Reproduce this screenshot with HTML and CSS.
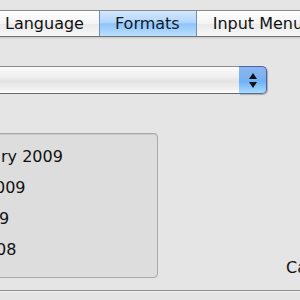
FILE: index.html
```html
<!DOCTYPE html>
<html lang="en">
<head>
    <meta charset="UTF-8">
    <title>International - Formats</title>
    <link rel="stylesheet" href="styles.css">
</head>
<body>
    <div class="window">
        <div class="tabs">
            <div class="tab first">Language</div>
            <div class="tab selected">Formats</div>
            <div class="tab">Input Menu</div>
        </div>
        <div class="popup">
            <div class="popup-field"></div>
            <div class="popup-stepper">
                <span class="arrow up"></span>
                <span class="arrow down"></span>
            </div>
        </div>
        <div class="dates-row">
            <div class="dates-box">
                <div class="line l1">ry 2009</div>
                <div class="line l2">009</div>
                <div class="line l3">9</div>
                <div class="line l4">08</div>
            </div>
            <div class="side-label">Calendar</div>
        </div>
        <div class="divider"></div>
    </div>
</body>
</html>
```

FILE: styles.css
```css
body, html {
    margin: 0;
    padding: 0;
    width: 300px;
    height: 300px;
    overflow: hidden;
    background-color: #e5e5e5;
    font-family: "DejaVu Sans", Verdana, sans-serif;
    font-size: 16px;
    color: #111;
}
.window {
    width: 300px;
    height: 300px;
    overflow: hidden;
    display: flex;
    flex-direction: column;
}
.tabs {
    margin-top: 10px;
    margin-left: -10px;
    width: 340px;
    height: 25px;
    display: flex;
    border-top: 1px solid #8a8a8a;
    border-bottom: 1px solid #6f6f6f;
    background: linear-gradient(#ffffff, #f4f4f4 50%, #e9e9e9 51%, #f7f7f7);
    box-shadow: 0 1px 0 #cfcfcf, 0 2px 0 #d9d9d9;
    flex-shrink: 0;
}
.tab {
    padding: 0 15px;
    line-height: 25px;
    white-space: nowrap;
    border-right: 1px solid #a9a9a9;
}
.tab.first {
    border-right: 1px solid #6f8fbf;
}
.tab.selected {
    padding: 0 16px 0 15px;
    background: linear-gradient(#d3e7fd, #b3d6fb 45%, #90c4f8 52%, #b9e0fe);
    border-right: 1px solid #6f8fbf;
    color: #0d1a2a;
}
.tab:last-child {
    padding-left: 16px;
    border-right: none;
}
.popup {
    margin-top: 29px;
    margin-left: -20px;
    width: 287px;
    height: 28px;
    display: flex;
    flex-shrink: 0;
}
.popup-field {
    flex: 1;
    border-top: 1px solid #8c8c8c;
    border-bottom: 1px solid #6a6a6a;
    background: linear-gradient(#fafafa, #efefef 40%, #e2e2e2 55%, #f1f1f1 85%, #ffffff);
}
.popup-stepper {
    width: 27px;
    border: 1px solid #4d63a8;
    border-left: none;
    border-bottom-color: #5d6d8a;
    border-radius: 0 5px 5px 0;
    background: linear-gradient(#8ab6ee, #7bb1f2 45%, #6fb0f6 55%, #a6dcff);
    box-shadow: 1px 1px 1px rgba(0, 0, 0, 0.25);
    display: flex;
    flex-direction: column;
    align-items: center;
    justify-content: center;
    gap: 3px;
}
.arrow {
    width: 0;
    height: 0;
    border-left: 4px solid transparent;
    border-right: 4px solid transparent;
}
.arrow.up {
    border-bottom: 6px solid #111;
}
.arrow.down {
    border-top: 6px solid #111;
}
.dates-row {
    margin-top: 39px;
    display: flex;
    flex-shrink: 0;
}
.dates-box {
    margin-left: -20px;
    width: 176px;
    height: 136px;
    padding-top: 7px;
    flex-shrink: 0;
    border: 1px solid #a9a9a9;
    border-radius: 4px;
    background-color: #dddddd;
    box-shadow: inset 0 1px 0 #c9c9c9;
}
.line {
    line-height: 31px;
    white-space: nowrap;
    padding-left: 20px;
}
.line.l2 {
    padding-left: 14px;
}
.line.l3 {
    padding-left: 18px;
}
.line.l4 {
    padding-left: 15px;
}
.side-label {
    margin-left: 128px;
    margin-bottom: 1px;
    align-self: flex-end;
    white-space: nowrap;
    line-height: 19px;
    flex-shrink: 0;
}
.divider {
    margin-top: 12px;
    height: 1px;
    background-color: #8e8e8e;
    border-bottom: 1px solid #f4f4f4;
    flex-shrink: 0;
}
```
